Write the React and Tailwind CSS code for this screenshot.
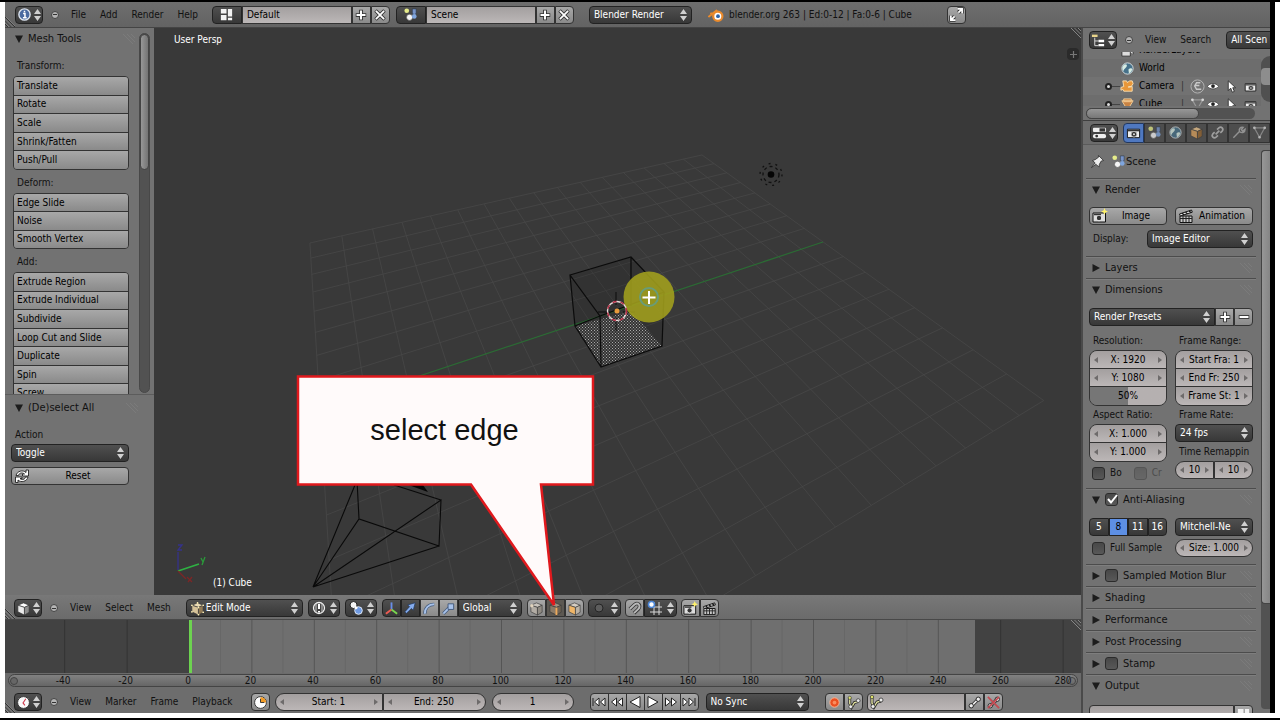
import React from 'react';

const darkBox = 'bg-gradient-to-b from-[#505050] to-[#383838] border border-[#222]';
const lightBox = 'bg-gradient-to-b from-[#a8a8a8] to-[#8a8a8a] border border-[#333]';
const fieldBox = 'bg-gradient-to-b from-[#a39f9f] to-[#bcb7b7] border border-[#333]';

const Svg = ({ size = 16, children, className = '' }) => (
    <svg width={size} height={size} viewBox="0 0 16 16" fill="none" className={`shrink-0 ${className}`} aria-hidden="true">
        {children}
    </svg>
);

const Cube = ({ left = '#bbb', right = '#888', top = '#ddd' }) => (
    <g stroke="#3a3a3a" strokeWidth="0.7" strokeLinejoin="round">
        <path d="M2 4.5 8 2l6 2.5-5 2.3z" fill={top} />
        <path d="M2 4.5 9 6.8V15l-7-3.5z" fill={left} />
        <path d="M14 4.5 9 6.8V15l5-3z" fill={right} />
    </g>
);

const Clapper = () => (
    <>
        <path d="M2 8h12v6.5H2z" fill="#c8c8c8" stroke="#111" />
        <path d="M2 10.5h12M5 8v6M8 8v6M11 8v6" stroke="#222" />
        <path d="m1.5 6 12-4 .8 2.2L2.3 8z" fill="#eee" stroke="#111" />
        <path d="m4 5.300 2 1.500M7.500 4.200l2 1.500M11 3l2 1.500" stroke="#111" strokeWidth="1.300" />
    </>
);

const Bone = () => (
    <>
        <path d="M5.500 11 11 5.500" stroke="#222" strokeWidth="3.500" />
        <path d="M5.500 11 11 5.500" stroke="#eee" strokeWidth="1.800" />
        <circle cx="4.500" cy="11.500" r="2.300" fill="#eee" stroke="#222" />
        <circle cx="12" cy="4.500" r="2.300" fill="#eee" stroke="#222" />
    </>
);

const icons = {
    info: (
        <>
            <circle cx="8" cy="8" r="6" fill="#4a6aa0" stroke="#dde4ee" strokeWidth="1.500" />
            <path d="M6.500 7H8.500v4.500M6.300 11.500h4M8 4v1.500" stroke="#fff" strokeWidth="1.600" />
        </>
    ),
    layout: (
        <>
            <path d="M2 2h6v5H2zM2 8.500h6V14H2z" fill="#f3f3f3" />
            <path d="M9.500 2H14v8H9.500zM9.500 11.500H14V14H9.500z" fill="#f3f3f3" />
        </>
    ),
    scene: (
        <>
            <circle cx="4" cy="4" r="2.500" fill="#e6ec8a" />
            <path d="M10 2h4v5l-2 1-2-1z" fill="#7894c8" stroke="#27384f" strokeWidth="0.600" />
            <circle cx="7" cy="11" r="3.300" fill="#f5f5f5" stroke="#444" strokeWidth="0.600" />
            <circle cx="12" cy="10" r="2.500" fill="#7fa5dd" />
        </>
    ),
    blender: (
        <>
            <path d="M1 9.500 8.500 3.500M3 6.500h6" stroke="#e98a2c" strokeWidth="2" strokeLinecap="round" />
            <circle cx="9.800" cy="9.200" r="4.600" fill="#fff" stroke="#e98a2c" strokeWidth="2.200" />
            <circle cx="10" cy="9.200" r="1.900" fill="#2c62a6" />
        </>
    ),
    outliner: (
        <>
            <path d="M1 3h6" stroke="#e9d48b" strokeWidth="2.500" />
            <path d="M4 5v8.500h4M4 8.500h4" stroke="#ddd" />
            <path d="M8 8.500h6M8 13h6" stroke="#fff" strokeWidth="2.500" />
        </>
    ),
    props: (
        <>
            <rect x="1" y="3" width="14" height="4.500" rx="1" fill="#eee" />
            <path d="M8 3.500h6v3.500H8z" fill="#333" />
            <rect x="1" y="9.500" width="14" height="4.500" rx="2" fill="#eee" />
            <circle cx="5" cy="11.800" r="1.500" fill="#333" />
        </>
    ),
    cube: <Cube left="#ececec" right="#8d8d8d" top="#fff" />,
    editCube: (
        <>
            <Cube left="#d6c299" right="#927b56" top="#ecdcb5" />
            <path d="M2 4.500h.1M8 2h.1M14 4.500h.1M9 7h.1M2 11.500h.1M9 14.500h.1M14 12h.1" stroke="#fff1b8" strokeWidth="1.800" strokeLinecap="round" />
        </>
    ),
    objectCube: <Cube left="#d9a05c" right="#94642f" top="#efc78f" />,
    vertCube: (
        <>
            <Cube left="#b2aca4" right="#8f8a82" top="#c9c4bd" />
            <circle cx="3" cy="5" r="1.800" fill="#e1d4be" />
        </>
    ),
    edgeCube: (
        <>
            <Cube left="#8b7b68" right="#706353" top="#a09280" />
            <path d="M9 7v8" stroke="#edaa5d" strokeWidth="2" />
        </>
    ),
    faceCube: <Cube left="#f0b668" right="#bcb3a6" top="#d5cec4" />,
    globe: (
        <>
            <circle cx="8" cy="8" r="6" fill="#46718a" stroke="#d5dde0" />
            <path d="M4 4c3-1.500 4 0 3 2S4 8 4 10s-2-2-1.500-3zM9 9c2-2 4-1 4 0s-2 4-3.500 4z" fill="#d7ece3" />
        </>
    ),
    sphereWire: (
        <>
            <circle cx="8" cy="8" r="5.500" stroke="#f1f1f1" strokeWidth="1.300" />
            <path d="M8 4v5M8 11v1.500" stroke="#fff" strokeWidth="2" />
            <path d="M5 4v8M11 4v8" stroke="#ccc" />
        </>
    ),
    pivot: (
        <>
            <circle cx="5.500" cy="5" r="3.500" fill="#f5f5f5" stroke="#222" />
            <circle cx="10.500" cy="10.500" r="3.800" fill="#6f9ae2" stroke="#dfe8f5" />
            <circle cx="8" cy="7.800" r="1.500" fill="#fff" />
        </>
    ),
    axes: (
        <>
            <path d="M8 9V1.500" stroke="#6a8ee8" strokeWidth="2" />
            <path d="m8 9-6 4.500" stroke="#ef5b52" strokeWidth="2" />
            <path d="m8 9 6 4.500" stroke="#79d64e" strokeWidth="2" />
        </>
    ),
    arrow: <path d="m2 12.500 5.500-6-2-2L14 2l-2.300 8.500-2-2L4 14z" fill="#86adef" stroke="#1e375e" strokeWidth="0.800" />,
    arc: (
        <>
            <path d="M3 13.500c0-6 4-10 10-10" stroke="#42597b" strokeWidth="3.500" />
            <path d="M3 13.500c0-6 4-10 10-10" stroke="#a8c2ea" strokeWidth="2" />
        </>
    ),
    scaleTool: (
        <>
            <path d="m2.500 13.500 6-6" stroke="#42597b" strokeWidth="3.500" />
            <path d="m2.500 13.500 6-6" stroke="#a8c2ea" strokeWidth="2" />
            <path d="M7.500 3h6v6h-6z" fill="#a8c2ea" stroke="#42597b" />
        </>
    ),
    dot: <circle cx="8" cy="8" r="4" fill="#5d5d5d" stroke="#252525" />,
    magnet: (
        <>
            <path d="M3 8.500 8 3.800c4-3 7 1.200 4.200 4.700L7.500 13" stroke="#333" strokeWidth="3.800" />
            <path d="M3 8.500 8 3.800c4-3 7 1.200 4.200 4.700L7.500 13" stroke="#b9b9b9" strokeWidth="2" />
        </>
    ),
    snap: (
        <>
            <path d="M7 2v13M12 2v13M3 7h12M3 12h12" stroke="#d9d9d9" />
            <circle cx="4.500" cy="4.500" r="3" fill="#fff" stroke="#4b86d8" strokeWidth="1.600" />
        </>
    ),
    camera: (
        <>
            <path d="M1.500 4.500h13v9h-13z" fill="#eee" stroke="#111" />
            <path d="M2 6h12" stroke="#333" strokeWidth="1.500" />
            <circle cx="8.500" cy="9.800" r="3" fill="#333" stroke="#bbb" />
            <circle cx="8.500" cy="9.800" r="1" fill="#eee" />
        </>
    ),
    cameraFlash: (
        <>
            <path d="M1 5h12.500v9H1z" fill="#ddd" stroke="#111" />
            <circle cx="7" cy="10" r="2.800" fill="#333" stroke="#eee" />
            <path d="M2 6.500h7" stroke="#333" strokeWidth="1.500" />
            <path d="m12.500 0 1 2.500 2.500 1-2.500 1-1 2.500-1-2.500-2.500-1 2.500-1z" fill="#fff36b" />
        </>
    ),
    clapper: <Clapper />,
    clock: (
        <>
            <circle cx="8" cy="8" r="6.300" fill="#fafafa" stroke="#333" />
            <path d="m10.500 4-3 4.500 2 2.500" stroke="#cf3b4e" strokeWidth="1.200" />
        </>
    ),
    preview: (
        <>
            <circle cx="8" cy="8" r="6.300" fill="#fff" stroke="#333" />
            <path d="M8 8V2a6 6 0 0 1 6 6z" fill="#f39b24" />
            <path d="M8 4v4h4" stroke="#333" />
        </>
    ),
    record: (
        <>
            <circle cx="8" cy="8" r="5" fill="#ea4f22" stroke="#f9b897" />
            <circle cx="8" cy="8" r="2" fill="#fa8d5f" />
        </>
    ),
    keying: (
        <>
            <path d="M4 2v7l2 4 3-5 4-1" stroke="#222" strokeWidth="3" />
            <path d="M4 2v7l2 4 3-5 4-1" stroke="#e5e5a0" strokeWidth="1.400" />
            <circle cx="4" cy="3" r="1.700" fill="#dfe36c" stroke="#333" strokeWidth="0.600" />
            <circle cx="5" cy="12.500" r="2" fill="#eee" stroke="#333" strokeWidth="0.800" />
            <circle cx="13" cy="6" r="2" fill="#eee" stroke="#333" strokeWidth="0.800" />
        </>
    ),
    bone: <Bone />,
    boneOff: (
        <>
            <Bone />
            <path d="m2 2 12 12M14 2 2 14" stroke="#c34a52" strokeWidth="1.800" />
        </>
    ),
    expand: (
        <>
            <path d="M9 2h5v5M14 2 10 6M7 14H2V9M2 14l4-4" stroke="#333" strokeWidth="3.500" />
            <path d="M9 2h5v5M14 2 10 6M7 14H2V9M2 14l4-4" stroke="#fff" strokeWidth="1.800" />
        </>
    ),
    plus: (
        <>
            <path d="M8 1v14M1 8h14" stroke="#333" strokeWidth="5" />
            <path d="M8 2v12M2 8h12" stroke="#fff" strokeWidth="2.600" />
        </>
    ),
    minus: (
        <>
            <path d="M1 8h14" stroke="#333" strokeWidth="5" />
            <path d="M2 8h12" stroke="#fff" strokeWidth="2.600" />
        </>
    ),
    close: (
        <>
            <path d="m2 2 12 12M14 2 2 14" stroke="#333" strokeWidth="4.600" />
            <path d="m2.500 2.500 11 11M13.500 2.500l-11 11" stroke="#fff" strokeWidth="2.400" />
        </>
    ),
    reload: (
        <path d="M2 7.500C3 3 9 1.500 12 4.500V2h2.500v6H8.500V6h2C8 4 5 5 4.500 7.500zM14 9c-1 4.500-7 6-10 3v2.500H1.500V9H8v1.500H6c2 2 5 1 5.500-1.500z" fill="#fff" stroke="#222" strokeWidth="0.900" />
    ),
    link: <path d="m6 10 4-4M7.500 5l2-2c2.500-2 5.500 1 3.500 3.500l-2 2M8.500 11l-2 2C4 15 1 12 3 9.500l2-2" stroke="#b9b9b9" strokeWidth="1.800" />,
    wrench: <path d="m2.500 13.500 6.500-6.500M9 7c-1-3 1-5 4-4.500L11 5l1.500 1.500L15 4.500C15 8 12 9 9 7z" stroke="#aaa" strokeWidth="1.500" />,
    mesh: (
        <>
            <path d="M2.500 3h11L8 13z" stroke="#999" strokeWidth="1.300" />
            <path d="M2.500 3h.1M13.500 3h.1M8 13h.1" stroke="#d8d8d8" strokeWidth="2.800" strokeLinecap="round" />
        </>
    ),
    pin: <path d="m1.500 14.500 4-5-3-2.500 3-1 3.500-2.500V1.500l5.500 5.500-2.500.5-2 3.500-.5 3-3-3z" fill="#eee" stroke="#333" strokeWidth="0.900" />,
    cameraObj: <path d="M3 2h4l1 2 2-2h3l1 3-2 3H9v1l4-1v5H4l-1-2-2 1V9l3-1z" fill="#e8973a" stroke="#fbdfb0" />,
    meshObj: <path d="M2 4h12l-6 10zM4 2h8v3H4z" fill="#c98343" stroke="#f4cf98" />,
    cameraData: (
        <>
            <circle cx="8" cy="8" r="7" stroke="#b5b5b5" />
            <path d="M11 4H7L5 7.500l2 3.500h5M6 7h4" stroke="#c9c9c9" strokeWidth="1.500" />
        </>
    ),
    layersObj: <path d="M2 8h9v6H2zM5 5h9v7" fill="#ddd" stroke="#333" />,
    eye: (
        <>
            <path d="M.5 8.500C4 3.500 12 3.500 15.500 8.500 12 13 4 13 .5 8.500z" fill="#fff" stroke="#333" />
            <circle cx="8" cy="8" r="2.500" fill="#222" />
        </>
    ),
    cursor: <path d="M4 1v12l3-3 2 5 2.500-1-2-4.500H13z" fill="#fff" stroke="#222" />,
    skipBack: <path d="M2 4v8M8 4 3.500 8 8 12zM14 4 9.500 8l4.500 4z" />,
    rewind: <path d="M7.500 4 2.500 8l5 4zM13.500 4l-5 4 5 4z" />,
    playBack: <path d="M13 2.500 3 8l10 5.500z" />,
    play: <path d="M3 2.500 13 8 3 13.500z" />,
    forward: <path d="m2.500 4 5 4-5 4zM8.500 4l5 4-5 4z" />,
    skipForward: <path d="m2 4 4.500 4L2 12zM8 4l4.500 4L8 12zM14 4v8" />,
};

const Icon = ({ name, size, className }) => <Svg size={size} className={className}>{icons[name]}</Svg>;

const UpDown = ({ className = '' }) => (
    <svg width="7" height="12" viewBox="0 0 7 12" className={`shrink-0 pointer-events-none ${className}`} aria-hidden="true">
        <path d="M3.500 0 7 5H0zM3.500 12 0 7h7z" fill="#d0d0d0" />
    </svg>
);

const EditorButton = ({ icon, label }) => (
    <button aria-label={label} className={`${darkBox} h-[18px] w-7 shrink-0 rounded flex items-center justify-center gap-0.5`}>
        <Icon name={icon} size={15} />
        <UpDown />
    </button>
);

const CollapseDot = () => (
    <button aria-label="Collapse menus" className="mx-2 w-2 h-2 shrink-0 rounded-full bg-[#b5b5b5] border border-[#444] flex items-center justify-center">
        <span className="w-1 h-px bg-[#333]" />
    </button>
);

const Menus = ({ items }) => (
    <nav className="ml-1 flex gap-[14px] text-[#111]">
        {items.map((m) => <button key={m}>{m}</button>)}
    </nav>
);

const IconButton = ({ name, label, className = '', size = 15 }) => (
    <button aria-label={label} className={`${lightBox} h-[18px] w-[19px] shrink-0 flex items-center justify-center ${className}`}>
        <Icon name={name} size={size} />
    </button>
);

const Select = ({ label, value, icon, className = '', round = 'rounded' }) => (
    <div className={`${darkBox} ${round} relative h-[18px] flex items-center overflow-hidden ${className}`}>
        {icon && <Icon name={icon} size={15} className="ml-[3px]" />}
        <select aria-label={label} className={`appearance-none bg-transparent text-white flex-1 min-w-0 h-full outline-none ${icon ? 'pl-px' : 'pl-1'}`}>
            <option>{value}</option>
        </select>
        <UpDown className="mr-1" />
    </div>
);

const MiniArrow = ({ flip }) => (
    <svg width="4" height="6" viewBox="0 0 4 6" className="shrink-0" aria-hidden="true">
        <path d={flip ? 'M0 0l4 3-4 3z' : 'M4 0 0 3l4 3z'} fill="#6e6b6b" />
    </svg>
);

const NumField = ({ label, value, className = '' }) => (
    <div className={`${fieldBox} h-[18px] flex items-center px-1 min-w-0 ${className}`}>
        <MiniArrow />
        <input aria-label={label} defaultValue={value} className="flex-1 min-w-0 bg-transparent text-center text-black outline-none" />
        <MiniArrow flip />
    </div>
);

const IdField = ({ icon, label, value }) => (
    <div className="flex">
        <button aria-label={`Browse ${label}`} className={`${darkBox} h-[18px] w-[30px] rounded-l flex items-center justify-center`}>
            <Icon name={icon} size={15} />
        </button>
        <input aria-label={label} defaultValue={value} className={`${fieldBox} h-[18px] w-[110px] px-1 text-black outline-none`} />
        <IconButton name="plus" label={`Add ${label}`} size={12} />
        <IconButton name="close" label={`Delete ${label}`} size={12} className="rounded-r" />
    </div>
);

const Hatch = ({ className = '' }) => (
    <svg width="10" height="10" viewBox="0 0 10 10" className={className} aria-hidden="true">
        <path d="M0 0l10 10M3.500 0 10 6.500M7 0l3 3" stroke="#989898" strokeWidth="0.800" />
    </svg>
);

const CornerHatch = () => (
    <svg width="10" height="10" viewBox="0 0 10 10" className="absolute left-0 bottom-0" aria-hidden="true">
        <path d="M0 0l10 10M0 3.500 6.500 10M0 7l3 3" stroke="#2c2c2c" strokeWidth="0.900" />
        <path d="M1 0l9 9M0 2.500 7.500 10M0 6l4 4" stroke="#9a9a9a" strokeWidth="0.500" />
    </svg>
);

const Grip = () => (
    <svg width="12" height="10" viewBox="0 0 12 10" className="ml-auto" aria-hidden="true">
        <path d="M0 0l10 10M4 0l8 8M8 0l4 4" stroke="#7d7d7d" strokeWidth="0.800" />
    </svg>
);

const Check = ({ label, checked, disabled, className = '' }) => (
    <label className={`flex items-center gap-[5px] ${disabled ? 'opacity-40' : ''} ${className}`}>
        <span className="relative w-[13px] h-[13px] shrink-0">
            <input type="checkbox" defaultChecked={checked} disabled={disabled} className="block appearance-none w-[13px] h-[13px] rounded-[3px] bg-gradient-to-b from-[#484848] to-[#585858] border border-[#2b2b2b]" />
            {checked && (
                <svg width="14" height="13" viewBox="0 0 14 13" className="absolute inset-0 pointer-events-none" aria-hidden="true">
                    <path d="m3 6 3 3.500L12 2" stroke="#fff" strokeWidth="2" fill="none" />
                </svg>
            )}
        </span>
        <span>{label}</span>
    </label>
);

const PanelHead = ({ title, open, check, checked }) => (
    <div className="h-[21px] flex items-center pl-1.5 pr-1 text-[11px] text-[#111]">
        <button className="flex items-center gap-[5px]" aria-expanded={!!open} aria-label={title}>
            <svg width="8" height="8" viewBox="0 0 8 8" aria-hidden="true">
                <path d={open ? 'M0 0.500h8L4 8z' : 'M0.500 0v8L8 4z'} fill="#1c1c1c" />
            </svg>
            {!check && title}
        </button>
        {check && <Check label={title} checked={checked} className="ml-[5px]" />}
        <Grip />
    </div>
);

const Panel = ({ title, open, check, checked, children }) => (
    <section className="border-t border-[#4c4c4c] shadow-[inset_0_1px_0_#7e7e7e]">
        <PanelHead title={title} open={open} check={check} checked={checked} />
        {children}
    </section>
);

const ToolGroup = ({ title, tools, height }) => (
    <div>
        <h3 className="h-[20px] leading-[20px] pl-1">{title}</h3>
        <div className={`${height} flex flex-col rounded-[4px] border border-[#333] overflow-hidden`}>
            {tools.map((tool) => (
                <button key={tool} className="flex-1 flex items-center px-[3px] text-black bg-gradient-to-b from-[#a8a8a8] to-[#8a8a8a] border-b border-[#333] last:border-b-0">
                    {tool}
                </button>
            ))}
        </div>
    </div>
);

const Toolbar = () => (
    <aside className="w-[149px] shrink-0 flex flex-col bg-[#727272] text-[#111] overflow-hidden">
        <div className="h-[367px] flex border-b border-[#5c5c5c]">
            <div className="flex-1 overflow-hidden">
                <div className="pl-1"><PanelHead title="Mesh Tools" open /></div>
                <div className="pl-2 pr-[10px] pt-[7px] flex flex-col gap-[3px]">
                    <ToolGroup title="Transform:" height="h-[94px]" tools={['Translate', 'Rotate', 'Scale', 'Shrink/Fatten', 'Push/Pull']} />
                    <ToolGroup title="Deform:" height="h-[56px]" tools={['Edge Slide', 'Noise', 'Smooth Vertex']} />
                    <ToolGroup title="Add:" height="h-[131px]" tools={['Extrude Region', 'Extrude Individual', 'Subdivide', 'Loop Cut and Slide', 'Duplicate', 'Spin', 'Screw']} />
                </div>
            </div>
            <div className="w-[11px] mr-1 mt-[5px] mb-px rounded-full bg-[#525252] border border-[#484848]">
                <div className="h-[136px] rounded-full bg-gradient-to-r from-[#979797] to-[#747474] border border-[#444]" />
            </div>
        </div>
        <div className="pl-1 pr-3 pt-0.5"><PanelHead title="(De)select All" open /></div>
        <div className="pl-[6px] pr-[25px] pt-[8px]">
            <h3 className="h-[18px] leading-[18px] pl-1">Action</h3>
            <Select label="Action" value="Toggle" className="mb-[5px]" />
            <button className={`${lightBox} w-full h-[18px] rounded flex items-center px-0.5 text-black`}>
                <Icon name="reload" />
                <span className="flex-1 text-center">Reset</span>
            </button>
        </div>
    </aside>
);

// maps the unit square onto the far half of the floor plane; t = -1 reaches the near side
const project = (s, t) => {
    const w = 0.4737 * s + 0.4294 * t + 1;
    return [(893 * s + 123 * t + 320) / w, (-52.4 * s - 61.7 * t + 409) / w];
};

const floorLines = [];
for (let i = 0; i <= 16; i++) {
    const k = i / 16;
    const t = k * 2 - 1;
    floorLines.push([project(k, -1), project(k, 1)]);
    if (i !== 8) floorLines.push([project(0, t), project(1, t)]);
}

const Scene3D = () => (
    <svg viewBox="154 28 927 567" preserveAspectRatio="xMidYMid slice" className="absolute inset-0 w-full h-full" fill="none" aria-hidden="true">
        <defs>
            <pattern id="stipple" width="3" height="3" patternUnits="userSpaceOnUse">
                <path d="M0 0h1v1H0zM1.500 1.500h1v1h-1z" fill="#aaa" />
            </pattern>
        </defs>
        <g stroke="#484848" strokeWidth="0.800">
            {floorLines.map(([a, b], i) => <path key={i} d={`M${a[0]} ${a[1]}L${b[0]} ${b[1]}`} />)}
        </g>
        <path d="M320 409 823 242" stroke="#2b6b34" strokeWidth="1.200" />
        <path d="M570 275 631 257 664 292 662 346 601 367 575 326z" fill="#000" fillOpacity="0.120" />
        <path d="M575 326 601 367 662 346 631 311z" fill="url(#stipple)" />
        <path d="M570 275 631 257 664 292 600 316zM570 275 575 326 601 367 662 346 664 292M600 316 601 367M631 257V306M575 326l25-10" stroke="#0b0b0b" strokeWidth="1.200" />
        <path d="M616 292V305M616 318V331M598 312h12M623 312h12" stroke="#0b0b0b" />
        <circle cx="649" cy="297" r="25.500" fill="#a3a11c" fillOpacity="0.880" />
        <circle cx="649" cy="297" r="9" stroke="#699c78" strokeWidth="2" />
        <path d="M649 291v13M642.500 297.500h13" stroke="#fff" strokeWidth="2" />
        <circle cx="617" cy="311" r="9.500" stroke="#e9dada" strokeWidth="1.400" />
        <circle cx="617" cy="311" r="9.500" stroke="#b52b43" strokeWidth="1.400" strokeDasharray="4 4" />
        <circle cx="617" cy="311" r="2.500" fill="#e79a3c" />
        <circle cx="771" cy="174.500" r="3.300" fill="#050505" />
        <circle cx="771" cy="174.500" r="8" stroke="#111" strokeWidth="1.300" strokeDasharray="3 3" />
        <circle cx="771" cy="174.500" r="11" stroke="#111" strokeWidth="1.300" strokeDasharray="2 5" />
        <path d="M313 587 359 519 439 546 441 500 313 587 439 546M313 587 355 485M359 519 357 480M441 500 394 485" stroke="#090909" strokeWidth="1.100" />
        <path d="M403 483 428 492 420 481z" fill="#050505" />
        <path d="M178 570V552M178 545h4l-4 5h4" stroke="#35328a" strokeWidth="1.300" />
        <path d="M178 571 199 564" stroke="#2fb043" strokeWidth="1.800" />
        <path d="M201 558l2 4M205 557l-3 8" stroke="#2a9a3a" strokeWidth="1.300" />
        <path d="M178 571 186 579M187 577l5 5M192 577l-4 5" stroke="#7c2626" strokeWidth="1.300" />
    </svg>
);

const Callout = () => (
    <svg viewBox="154 28 927 567" preserveAspectRatio="xMidYMid slice" className="absolute inset-0 z-10 w-full h-full overflow-visible pointer-events-none">
        <path d="M298 376.500H593V484.500H541L554 605 471 484.500H298z" fill="#fffafa" stroke="#e0191d" strokeWidth="2.500" />
        <text x="444.500" y="440" textAnchor="middle" fontSize="29" fill="#111" style={{ fontFamily: '"Liberation Sans", Arial, sans-serif' }}>select edge</text>
    </svg>
);

const Viewport = () => (
    <main className="relative flex-1 bg-[#393939] text-white">
        <Scene3D />
        <span className="absolute left-5 top-[5px]">User Persp</span>
        <span className="absolute left-[59px] bottom-[5px]">(1) Cube</span>
        <button aria-label="Show properties" className="absolute right-[2px] top-[20px] w-3 h-3 bg-[#2a2a2a] rounded-sm flex items-center justify-center">
            <svg width="7" height="7" viewBox="0 0 7 7" aria-hidden="true"><path d="M3.500 0v7M0 3.500h7" stroke="#777" strokeWidth="1.200" /></svg>
        </button>
        <Hatch className="absolute right-0 top-0" />
        <Callout />
    </main>
);

const ViewHeader = () => (
    <div className="h-[25px] shrink-0 relative flex items-center pl-[9px] pt-0.5 bg-gradient-to-b from-[#787878] to-[#6b6b6b] border-b border-[#484848]">
        <CornerHatch />
        <EditorButton icon="cube" label="3D view editor" />
        <CollapseDot />
        <Menus items={['View', 'Select', 'Mesh']} />
        <Select label="Mode" value="Edit Mode" icon="editCube" className="ml-[15px] w-[117px]" />
        <button aria-label="Viewport shading" className={`${darkBox} ml-[5px] h-[18px] w-8 rounded flex items-center justify-center gap-[3px]`}><Icon name="sphereWire" /><UpDown /></button>
        <button aria-label="Pivot point" className={`${darkBox} ml-[5px] h-[18px] w-8 rounded flex items-center justify-center gap-[3px]`}><Icon name="pivot" /><UpDown /></button>
        <div className="ml-[5px] flex">
            <button aria-label="Manipulator" className={`${darkBox} h-[18px] w-[19px] rounded-l flex items-center justify-center`}><Icon name="axes" size={15} /></button>
            <button aria-label="Translate manipulator" className={`${darkBox} h-[18px] w-[19px] flex items-center justify-center`}><Icon name="arrow" size={14} /></button>
            <IconButton name="arc" label="Rotate manipulator" />
            <IconButton name="scaleTool" label="Scale manipulator" />
            <Select label="Orientation" value="Global" className="w-[64px]" round="rounded-r" />
        </div>
        <div className="ml-[5px] flex">
            <IconButton name="vertCube" label="Vertex select" className="rounded-l" />
            <button aria-label="Edge select" className="h-[18px] w-[19px] border border-[#333] bg-[#5c5852] flex items-center justify-center"><Icon name="edgeCube" size={15} /></button>
            <IconButton name="faceCube" label="Face select" className="rounded-r" />
        </div>
        <button aria-label="Proportional editing" className={`${darkBox} ml-[4px] h-[18px] w-[33px] rounded flex items-center justify-center gap-1`}><Icon name="dot" /><UpDown /></button>
        <div className="ml-[4px] flex">
            <IconButton name="magnet" label="Snap" className="rounded-l" />
            <button aria-label="Snap element" className={`${darkBox} h-[18px] w-[33px] rounded-r flex items-center justify-center gap-1`}><Icon name="snap" /><UpDown /></button>
        </div>
        <div className="ml-[4px] flex">
            <IconButton name="cameraFlash" label="OpenGL render" className="rounded-l" />
            <IconButton name="clapper" label="OpenGL animation" className="rounded-r" />
        </div>
    </div>
);

const ticks = Array.from({ length: 17 }, (_, i) => (i - 2) * 20);

const Timeline = () => (
    <div className="shrink-0">
        <div className="relative h-[53px] bg-[#6f6f6f] overflow-hidden">
            <svg viewBox="5 0 1076 53" preserveAspectRatio="none" className="block w-full h-full" aria-hidden="true">
                <path d="M5 0h184v53H5zM975 0h106v53H975z" fill="#424242" />
                {ticks.map((t) => <path key={t} d={`M${189.5 + t * 3.12} 0v53`} stroke="#000" strokeOpacity="0.230" />)}
                {ticks.filter((t) => t >= 0 && t < 240).map((t) => <path key={t} d={`M${220.5 + t * 3.12} 0v53`} stroke="#000" strokeOpacity="0.070" />)}
                <path d="M190.500 0v53" stroke="#6dd350" strokeWidth="3" />
            </svg>
            <Hatch className="absolute right-0 top-0" />
        </div>
        <div className="h-[14px] pt-px bg-[#6b6b6b]">
            <div className="h-[13px] mx-[3px] relative rounded-full border border-[#444] bg-gradient-to-b from-[#818181] to-[#666] flex justify-between items-center pl-[54px] pr-[14px] text-[#111]">
                <span className="absolute left-px w-2 h-2 rounded-full bg-[#666] border border-[#444]" />
                {ticks.map((t) => <span key={t} className="w-0 flex justify-center leading-none">{t}</span>)}
                <span className="absolute right-px w-2 h-2 rounded-full border border-[#444]" />
            </div>
        </div>
    </div>
);

const playback = [
    ['skipBack', 'Jump to start'],
    ['rewind', 'Previous keyframe'],
    ['playBack', 'Play reversed'],
    ['play', 'Play'],
    ['forward', 'Next keyframe'],
    ['skipForward', 'Jump to end'],
];

const TimelineHeader = () => (
    <div className="relative h-[26px] pt-1 shrink-0 flex items-center pl-[9px] bg-[#6d6d6d]">
        <CornerHatch />
        <EditorButton icon="clock" label="Timeline editor" />
        <CollapseDot />
        <Menus items={['View', 'Marker', 'Frame', 'Playback']} />
        <IconButton name="preview" label="Use preview range" className="ml-[18px] rounded" />
        <div className="ml-[5px] flex">
            <NumField label="Start" value="Start: 1" className="w-[108px] rounded-l-full" />
            <NumField label="End" value="End: 250" className="w-[103px] rounded-r-full" />
        </div>
        <NumField label="Current frame" value="1" className="ml-[6px] w-[82px] rounded-full" />
        <div className="ml-4 flex">
            {playback.map(([name, label]) => (
                <button key={name} aria-label={label} className={`${lightBox} h-[18px] w-[19px] -mr-px flex items-center justify-center first:rounded-l last:rounded-r`}>
                    <svg width="16" height="16" viewBox="0 0 16 16" fill="#fff" stroke="#222" strokeWidth="1" aria-hidden="true">{icons[name]}</svg>
                </button>
            ))}
        </div>
        <Select label="Sync" value="No Sync" className="ml-2 w-[103px]" />
        <div className="ml-4 flex">
            <IconButton name="record" label="Auto keyframe" className="rounded-l" />
            <IconButton name="keying" label="Keying set" className="rounded-r" />
        </div>
        <div className="ml-1 flex">
            <div className={`${fieldBox} h-[18px] w-[98px] rounded-l flex items-center`}>
                <Icon name="keying" />
                <input aria-label="Active keying set" className="flex-1 min-w-0 bg-transparent outline-none" />
            </div>
            <IconButton name="bone" label="Insert keyframe" />
            <IconButton name="boneOff" label="Delete keyframe" className="rounded-r" />
        </div>
    </div>
);

const OutlinerRow = ({ icon, name, toggles, data }) => (
    <div className="h-[18px] shrink-0 flex items-center odd:bg-[#727272] even:bg-[#6d6d6d]">
        <span className="w-[22px] ml-[22px] flex items-center text-[#333]">
            {toggles && <span className="w-[7px] h-[7px] rounded-full bg-[#ddd] border-2 border-[#222]" />}
            {toggles && <span className="w-2 h-px bg-[#444]" />}
        </span>
        <span className="flex items-center gap-1 text-black -ml-[7px]">
            <Icon name={icon} size={15} />
            {name}
        </span>
        {toggles && (
            <span className="ml-auto flex items-center gap-0.5 pr-1 text-[#333]">
                <span className="mr-1">|</span>
                <Icon name={data} size={15} />
                <Icon name="eye" size={12} />
                <Icon name="cursor" size={13} className="ml-1" />
                <Icon name="camera" size={13} className="ml-1" />
            </span>
        )}
    </div>
);

const tabs = [
    ['camera', 'Render'],
    ['scene', 'Scene'],
    ['globe', 'World'],
    ['objectCube', 'Object'],
    ['link', 'Constraints'],
    ['wrench', 'Modifiers'],
    ['mesh', 'Object data'],
];

const FieldLabel = ({ children }) => <h4 className="h-[18px] leading-[18px] pl-1 whitespace-nowrap overflow-hidden">{children}</h4>;

const StackRow = ({ value }) => (
    <div className="h-[18px] flex items-center px-1 bg-gradient-to-b from-[#a39f9f] to-[#bcb7b7] border-b border-[#333] last:border-b-0">
        <MiniArrow />
        <input aria-label={value} defaultValue={value} className="flex-1 min-w-0 bg-transparent text-center text-black outline-none" />
        <MiniArrow flip />
    </div>
);

const Stack = ({ items, children }) => (
    <div className="rounded-[8px] border border-[#333] overflow-hidden">
        {items.map((v) => <StackRow key={v} value={v} />)}
        {children}
    </div>
);

const Sidebar = () => (
    <aside className="w-[189px] shrink-0 flex flex-col bg-[#727272] border-l-2 border-[#4a4a4a] text-[#111] overflow-hidden">
        <div className="h-[24px] shrink-0 flex items-center pl-[6px] overflow-hidden">
            <EditorButton icon="outliner" label="Outliner editor" />
            <CollapseDot />
            <Menus items={['View', 'Search']} />
            <button className={`${darkBox} ml-[15px] h-[18px] w-[60px] shrink-0 pl-1 text-left leading-none text-white rounded-l whitespace-nowrap`}>All Scen</button>
        </div>
        <div className="h-[54px] shrink-0 flex overflow-hidden">
            <div className="flex-1 flex flex-col -mt-[11px]">
                <OutlinerRow icon="layersObj" name="RenderLayers" />
                <OutlinerRow icon="globe" name="World" />
                <OutlinerRow icon="cameraObj" name="Camera" toggles data="cameraData" />
                <OutlinerRow icon="meshObj" name="Cube" toggles data="mesh" />
            </div>
            <div className="w-[9px] my-1 rounded-l-full bg-[#505050] pt-3">
                <div className="h-[17px] rounded-l bg-[#8d8d8d]" />
            </div>
        </div>
        <div className="h-[15px] shrink-0 pl-[3px] pr-[15px] pt-0.5 border-b border-[#3e3e3e]">
            <div className="h-[11px] rounded-full bg-[#525252]">
                <div className="h-full w-2/3 rounded-full bg-gradient-to-b from-[#979797] to-[#777] border border-[#444]" />
            </div>
        </div>
        <div className="h-[24px] shrink-0 flex items-center pl-[7px] bg-[#6c6c6c] border-b border-[#5a5a5a] overflow-hidden">
            <EditorButton icon="props" label="Properties editor" />
            <div className="ml-[5px] flex flex-1" role="tablist">
                {tabs.map(([icon, label], i) => (
                    <button key={icon} role="tab" aria-label={label} aria-selected={i === 0} className={`h-[20px] flex-1 border flex items-center justify-center ${i === 0 ? 'bg-[#4f78c0] border-[#22385f] rounded-l' : 'bg-[#4d4d4d] border-[#333]'}`}>
                        <Icon name={icon} size={15} className={i === 0 ? '' : 'opacity-75'} />
                    </button>
                ))}
            </div>
        </div>
        <div className="flex-1 min-h-0 flex">
            <div className="flex-1 min-w-0 pl-[3px] pr-[5px] overflow-hidden">
                <div className="h-[33px] flex items-center pl-1 text-[11px]">
                    <Icon name="pin" size={15} />
                    <Icon name="scene" size={15} className="ml-[6px]" />
                    Scene
                </div>
                <Panel title="Render" open>
                    <div className="px-[3px] pt-[7px] pb-2">
                        <div className="grid grid-cols-2 gap-2">
                            <button className={`${lightBox} h-[18px] rounded flex items-center px-0.5 text-black`}><Icon name="cameraFlash" /><span className="flex-1">Image</span></button>
                            <button className={`${lightBox} h-[18px] rounded flex items-center px-0.5 text-black`}><Icon name="clapper" /><span className="flex-1">Animation</span></button>
                        </div>
                        <label className="mt-[5px] flex items-center pl-1">
                            <span className="w-[54px]">Display:</span>
                            <Select label="Display" value="Image Editor" className="flex-1" />
                        </label>
                    </div>
                </Panel>
                <Panel title="Layers" />
                <Panel title="Dimensions" open>
                    <div className="px-[3px] pt-2 pb-1">
                        <div className="flex">
                            <Select label="Render Presets" value="Render Presets" className="flex-1" round="rounded-l" />
                            <IconButton name="plus" label="Add preset" size={12} />
                            <IconButton name="minus" label="Remove preset" size={12} className="rounded-r" />
                        </div>
                        <div className="mt-[6px] grid grid-cols-2 gap-2">
                            <div className="min-w-0">
                                <FieldLabel>Resolution:</FieldLabel>
                                <Stack items={['X: 1920', 'Y: 1080']}>
                                    <div className="h-[18px] flex bg-gradient-to-r from-[#767676] from-50% to-[#b5b0b0] to-50%">
                                        <input aria-label="Resolution percentage" defaultValue="50%" className="w-full bg-transparent text-center text-black outline-none" />
                                    </div>
                                </Stack>
                                <FieldLabel>Aspect Ratio:</FieldLabel>
                                <Stack items={['X: 1.000', 'Y: 1.000']} />
                                <div className="h-[22px] flex items-center gap-[12px] pl-[3px]">
                                    <Check label="Bo" />
                                    <Check label="Cr" disabled />
                                </div>
                            </div>
                            <div className="min-w-0">
                                <FieldLabel>Frame Range:</FieldLabel>
                                <Stack items={['Start Fra: 1', 'End Fr: 250', 'Frame St: 1']} />
                                <FieldLabel>Frame Rate:</FieldLabel>
                                <Select label="Frame Rate" value="24 fps" className="mb-px" />
                                <FieldLabel>Time Remappin</FieldLabel>
                                <div className="flex">
                                    <NumField label="Old" value="10" className="flex-1 rounded-l-full" />
                                    <NumField label="New" value="10" className="flex-1 rounded-r-full" />
                                </div>
                            </div>
                        </div>
                    </div>
                </Panel>
                <Panel title="Anti-Aliasing" open check checked>
                    <div className="px-[3px] pt-2 pb-[7px] grid grid-cols-2 gap-x-2 gap-y-[3px]">
                        <div className="flex">
                            {['5', '8', '11', '16'].map((n) => (
                                <button key={n} className={`h-[18px] leading-none flex-1 first:rounded-l last:rounded-r ${n === '8' ? 'bg-[#5d8fe4] border border-[#222] text-black' : 'bg-gradient-to-b from-[#505050] to-[#383838] border border-[#222] text-white'}`}>{n}</button>
                            ))}
                        </div>
                        <Select label="Filter" value="Mitchell-Ne" />
                        <Check label="Full Sample" className="pl-[3px] whitespace-nowrap" />
                        <NumField label="Size" value="Size: 1.000" className="rounded-full" />
                    </div>
                </Panel>
                <Panel title="Sampled Motion Blur" check />
                <Panel title="Shading" />
                <Panel title="Performance" />
                <Panel title="Post Processing" />
                <Panel title="Stamp" check />
                <Panel title="Output" open>
                    <div className="px-[3px] pt-[9px] flex">
                        <input aria-label="Output path" className={`${fieldBox} h-[18px] flex-1 min-w-0 rounded-l px-1 text-black`} />
                        <IconButton name="layout" label="Browse" className="rounded-r" />
                    </div>
                </Panel>
            </div>
            <div className="w-[9px] mt-[5px] mb-1 rounded-l bg-[#525252]">
                <div className="h-[454px] rounded-l bg-gradient-to-r from-[#979797] to-[#858585] border-l border-y border-[#444]" />
            </div>
        </div>
    </aside>
);

const TopBar = () => (
    <header className="relative h-[26px] shrink-0 flex items-center pl-[10px] bg-gradient-to-b from-[#6e6e6e] to-[#636363] border-b border-[#444] text-[#111]">
        <CornerHatch />
        <EditorButton icon="info" label="Info editor" />
        <CollapseDot />
        <Menus items={['File', 'Add', 'Render', 'Help']} />
        <div className="ml-[14px] flex gap-[6px]">
            <IdField icon="layout" label="Screen" value="Default" />
            <IdField icon="scene" label="Scene" value="Scene" />
        </div>
        <Select label="Render engine" value="Blender Render" className="ml-[15px] w-[103px]" />
        <Icon name="blender" className="ml-4" />
        <span className="ml-[5px] whitespace-nowrap">blender.org 263 | Ed:0-12 | Fa:0-6 | Cube</span>
        <IconButton name="expand" label="Back to previous" className="ml-[35px] rounded" />
    </header>
);

const App = () => (
    <div
        className="h-screen w-full flex flex-col bg-white border-t-2 border-black text-[10px] leading-[14px] overflow-hidden"
        style={{ fontFamily: '"DejaVu Sans Condensed", "DejaVu Sans", sans-serif' }}
    >
        <div className="flex-1 min-h-0 ml-[5px] mr-[5px] border-r-[5px] border-black flex flex-col">
            <TopBar />
            <div className="flex-1 min-h-0 flex">
                <div className="flex-1 min-w-0 flex flex-col text-[#111]">
                    <div className="flex-1 min-h-0 flex">
                        <Toolbar />
                        <Viewport />
                    </div>
                    <ViewHeader />
                    <Timeline />
                    <TimelineHeader />
                </div>
                <Sidebar />
            </div>
        </div>
        <div className="h-[7px] shrink-0 bg-white border-b-2 border-black" />
    </div>
);

export default App;
